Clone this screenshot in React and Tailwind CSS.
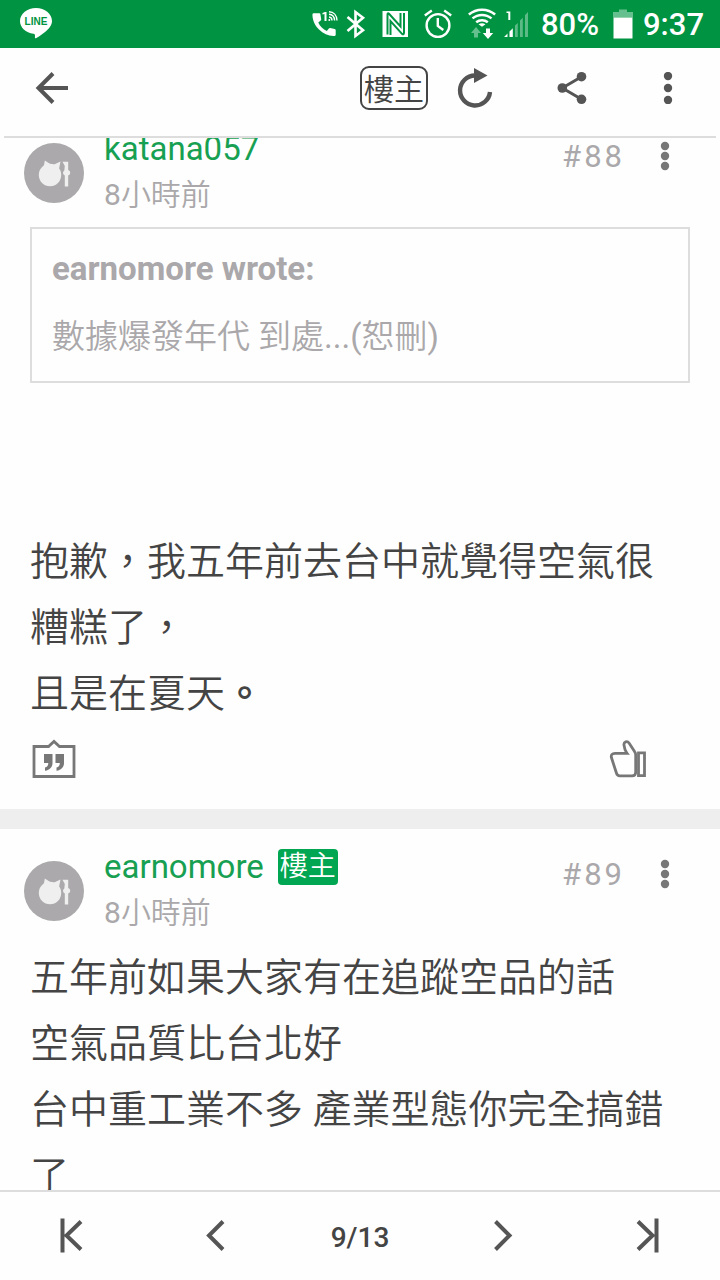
import React from "react";

function LineLogo() {
  return (
    <svg className="h-8 w-8" viewBox="20 9 32 32" role="img" aria-label="LINE">
      <path
        fill="#fff"
        d="M36 9c-8.800 0-16 5.800-16 13 0 6.500 5.800 11.900 13.500 12.800 1.300.3 1.600 1 1.500 2.300l-.1 1.500c-.1.700.4.900 1 .6C40.500 36.700 47.500 32 50.200 27.500 51.400 25.800 52 24 52 22c0-7.200-7.200-13-16-13z"
      />
      <text x="36" y="26" textAnchor="middle" fill="#009442" fontSize="10" className="font-['Liberation_Sans',sans-serif] font-bold">
        LINE
      </text>
    </svg>
  );
}

function CallIcon() {
  return (
    <svg className="h-8 w-[26px]" viewBox="311 8 26 32" fill="#fff" aria-hidden="true">
      <path d="M311.500 13.500c-.4 5.500 2 11.500 6.500 16 4.500 4.400 10 6.800 15.600 6.400.7 0 1.100-.5 1.100-1.200v-4.600c0-.6-.4-1.100-1-1.200l-4.500-.8c-.5-.1-1 .1-1.300.5l-2.100 2.500c-3.600-1.600-7-5-8.500-8.600l2.400-2c.4-.3.6-.8.5-1.300l-.8-5c-.1-.6-.6-1-1.200-1h-5.400c-.7 0-1.200.2-1.300 1z" />
      <path d="M321.500 14.500v-1.600l2.500-.9h1.500V21h-2v-7z" />
      <g fill="none" stroke="#fff" strokeWidth="1.400">
        <path d="M328 17a3.500 3.500 0 0 1 3 3.500M328 14.200c3.300.2 5.400 2.500 5.600 6.300M328 11.800c4.700.1 7.800 3.500 8 8.700" />
      </g>
      <circle cx="328.300" cy="20" r="1" />
    </svg>
  );
}

function BluetoothIcon() {
  return (
    <svg className="h-8 w-5" viewBox="345 8 20 32" fill="none" stroke="#fff" strokeWidth="2.600" aria-hidden="true">
      <path d="M346.500 17l15.500 13.300-7.500 5.700V12l7.500 5.700L346.500 31" />
    </svg>
  );
}

function NfcIcon() {
  return (
    <svg className="h-8 w-[26px]" viewBox="381 8 26 32" aria-hidden="true">
      <path fill="#fff" d="M381.500 11H407v26h-25.500z" />
      <path fill="none" stroke="#009442" strokeWidth="2" d="M386.500 34.500V14.800c0-1.500.6-1.900 1.500-1l11.500 12.700V13M389.500 35V21l11.500 12.800c1 1 2 .6 2-1V13" />
    </svg>
  );
}

function AlarmIcon() {
  return (
    <svg className="h-8 w-7" viewBox="424 8 28 32" fill="none" stroke="#fff" strokeWidth="2.400" aria-hidden="true">
      <circle cx="438" cy="25.500" r="11.400" />
      <path d="M437.800 18v8l5.500 4M424.800 15.500l7-5M451.200 15.500l-7-5" />
    </svg>
  );
}

function WifiIcon() {
  return (
    <svg className="h-8 w-7" viewBox="468 8 28 32" fill="none" aria-hidden="true">
      <g stroke="#fff" strokeWidth="2.500">
        <path d="M468.900 14.500c7.500-6.500 18.700-6.500 26.200 0M472.500 18.400c5.500-4.700 13.500-4.700 19 0M476.200 22.200c3.300-2.700 8.300-2.700 11.600 0" />
      </g>
      <path fill="#fff" d="M478.500 24.200c2-1.300 5-1.300 7 0l-3.500 2.600zM486 28.500h4V33h3.200l-5.200 6-5.200-6h3.200z" />
      <path fill="#66bf8e" d="M474 37.500h4V33h3l-5-6-5 6h3z" />
    </svg>
  );
}

function SignalIcon() {
  return (
    <svg className="h-8 w-[25px]" viewBox="504 8 25 32" aria-hidden="true">
      <path fill="#fff" d="M506.500 13v-1.500h3.800V20h-2v-7zM504 37l3.500-3.500V37zM509.500 31.500l3.300-3.300V37h-3.300z" />
      <path fill="#5cba87" d="M515 25.500l2.800-2.500v14H515zM520 20.500l2.800-2.800V37H520zM525 15l3-3v25h-3z" />
    </svg>
  );
}

function BatteryIcon() {
  return (
    <svg className="h-8 w-5" viewBox="612 8 20 32" aria-hidden="true">
      <path fill="#66bf8e" d="M618 9.500h8V12h6v5.500h-20V12h6z" />
      <path fill="#fff" d="M612.500 17.500h19v21h-19z" />
    </svg>
  );
}

function Dots({ color, gap }) {
  return (
    <svg className="h-8 w-8" viewBox="-16 -16 32 32" fill={color} aria-hidden="true">
      <circle cy={-gap} r="4.200" />
      <circle r="4.200" />
      <circle cy={gap} r="4.200" />
    </svg>
  );
}

function Stroke({ d }) {
  return (
    <svg className="h-10 w-10" viewBox="0 0 40 40" fill="none" stroke="#555" strokeWidth="4" aria-hidden="true">
      <path d={d} />
    </svg>
  );
}

function Avatar() {
  return (
    <svg className="mt-8 h-[60px] w-[60px] shrink-0" viewBox="0 0 60 60" aria-hidden="true">
      <circle cx="30" cy="30" r="30" fill="#aba9ab" />
      <g fill="#efefef">
        <circle cx="26" cy="32" r="11.200" />
        <path d="M20.800 17.500l6.200 4-7.500 3.500zM36.500 18.500l-1.800 9-5.700-5.500z" />
        <path d="M38.500 18.800h5.700v8.200a2.800 2.800 0 0 1 0 5.400v11.200h-3.400V32.400a2.800 2.800 0 0 1-.5-5l.5-4.400z" />
      </g>
    </svg>
  );
}

function PostHeader({ name, owner, number }) {
  return (
    <header className="flex pr-[39px] pl-6">
      <Avatar />
      <div className="ml-5 flex-1 pt-4">
        <div className="flex h-11 items-center gap-[14px]">
          <a href="#profile" className="text-[33px] leading-[46px] font-normal text-[#17a052]">{name}</a>
          {owner && (
            <span className="flex h-9 items-center rounded bg-[#00a651] px-[2px] text-[28px] leading-8 text-white">樓主</span>
          )}
        </div>
        <time className="block text-[30px] leading-[48px] text-[#aaa8aa]">
          <span className="font-normal">8</span>小時前
        </time>
      </div>
      <span className="pt-6 text-[31px] leading-[44px] font-normal tracking-[3px] text-[#aaa8aa]">{number}</span>
      <button type="button" aria-label="更多" className="mt-[29px] ml-6 flex h-8 w-8 justify-center">
        <Dots color="#777" gap={10} />
      </button>
    </header>
  );
}

const bodyText = "px-[30px] text-[39px] leading-[66px] text-[#444]";

export default function App() {
  return (
    <div lang="zh-TW" className="flex h-screen flex-col overflow-hidden bg-[#fefefe] font-['Roboto','Noto_Sans_CJK_TC',sans-serif] font-[350]">
      <div className="flex h-12 shrink-0 items-center bg-[#009442] pr-4 pl-5 font-medium text-white">
        <LineLogo />
        <div className="ml-auto flex items-center">
          <CallIcon />
          <span className="w-2" />
          <BluetoothIcon />
          <span className="w-4" />
          <NfcIcon />
          <span className="w-4" />
          <AlarmIcon />
          <span className="w-4" />
          <WifiIcon />
          <span className="w-2" />
          <SignalIcon />
          <span className="ml-3 pt-[2px] text-[31px] leading-[46px]">80%</span>
          <span className="w-[14px]" />
          <BatteryIcon />
          <span className="ml-[10px] pt-[2px] text-[31px] leading-[46px]">9:37</span>
        </div>
      </div>

      <nav className="mx-1 flex h-[90px] shrink-0 items-center border-b-2 border-[#ddd] pb-2">
        <button type="button" aria-label="返回" className="flex w-24 justify-center">
          <Stroke d="M36 20H6M21 5.500L6.500 20 21 34.500" />
        </button>
        <button type="button" className="ml-auto flex h-11 w-[68px] items-center justify-center rounded-[9px] border-2 border-[#444] pt-1 text-[30px] leading-9 text-[#444]">
          樓主
        </button>
        <button type="button" aria-label="重新整理" className="flex w-24 justify-center">
          <svg className="h-10 w-10" viewBox="456 68 40 40" aria-hidden="true">
            <path fill="none" stroke="#555" strokeWidth="4.400" d="M475 75.500a15 15 0 1 0 15 16.500" />
            <path fill="#555" d="M474 68l13.500 7.500L474 83z" />
          </svg>
        </button>
        <button type="button" aria-label="分享" className="flex w-24 justify-center">
          <svg className="h-10 w-10" viewBox="552 68 40 40" fill="#555" aria-hidden="true">
            <path fill="none" stroke="#555" strokeWidth="3" d="M581.500 76.700L562.300 88l19.200 11.300" />
            <circle cx="562.300" cy="88" r="4.800" />
            <circle cx="581.500" cy="76.700" r="4.800" />
            <circle cx="581.500" cy="99.300" r="4.800" />
          </svg>
        </button>
        <button type="button" aria-label="選單" className="flex w-24 justify-center">
          <Dots color="#555" gap={12} />
        </button>
      </nav>

      <main className="min-h-0 flex-1 overflow-hidden">
        <article className="-mt-[27px]">
          <PostHeader name="katana057" number="#88" />
          <blockquote className="mx-[30px] mt-2 border-2 border-[#ddd] px-5 py-4 text-[33px] text-[#aaa8aa]">
            <p className="leading-[48px] font-bold">earnomore wrote:</p>
            <p className="pt-4 leading-[56px]">
              數據爆發年代 到處<span className="font-normal">...(</span>恕刪<span className="font-normal">)</span>
            </p>
          </blockquote>
          <p className={`${bodyText} pt-[146px]`}>
            抱歉，我五年前去台中就覺得空氣很糟糕了，
            <br />
            且是在夏天<span className="font-bold">。</span>
          </p>
          <div className="flex h-[82px] items-start justify-between pt-3 pr-[73px] pl-8">
            <button type="button" aria-label="引言">
              <svg className="h-10 w-11" viewBox="32 738 44 40" aria-hidden="true">
                <path fill="none" stroke="#777" strokeWidth="2.800" d="M34 745.500h14.500l5.500-5 5.500 5H74v30H34z" />
                <path fill="#777" d="M44 753h8.500v9c0 4-2.500 7-7.500 7.800v-3.300c2.300-.6 3.300-2 3.300-4.500H44zM55.500 753H64v9c0 4-2.500 7-7.500 7.800v-3.300c2.300-.6 3.300-2 3.300-4.500h-4.300z" />
              </svg>
            </button>
            <button type="button" aria-label="讚">
              <svg className="h-10 w-[38px]" viewBox="609 738 38 40" fill="none" stroke="#777" strokeWidth="2.800" aria-hidden="true">
                <path d="M627 752.300h-12c-3 0-4.300 1.700-3.500 4.500l5 15.500c.5 1.600 1.500 2.500 3.200 2.500H632c2.500 0 3.700-1.200 3.700-3.600V754c0-1.300-.3-2.300-1-3.200l-5.500-8.600c-2-2.800-5.700-1.500-5.200 2 .3 3 1 5.600 3 8.100z" />
                <path d="M638.500 751.800h6v22.900h-6z" />
              </svg>
            </button>
          </div>
        </article>

        <div className="h-5 bg-[#eee]" />

        <article>
          <PostHeader name="earnomore" owner number="#89" />
          <p className={`${bodyText} pt-2`}>
            五年前如果大家有在追蹤空品的話
            <br />
            空氣品質比台北好
            <br />
            台中重工業不多 產業型態你完全搞錯了
          </p>
        </article>
      </main>

      <footer className="grid h-[90px] shrink-0 grid-cols-5 place-items-center border-t-2 border-[#ddd] bg-[#fefefe]">
        <button type="button" aria-label="第一頁">
          <Stroke d="M10.500 2.500v34M29 5.500L14.500 19.500 29 33.500" />
        </button>
        <button type="button" aria-label="上一頁">
          <Stroke d="M27 5.500L13 19.500l14 14" />
        </button>
        <span className="pt-1 text-[28px] font-medium text-[#444]">9/13</span>
        <button type="button" aria-label="下一頁">
          <Stroke d="M11.500 5.500l14 14-14 14" />
        </button>
        <button type="button" aria-label="最後一頁">
          <Stroke d="M28.500 2.500v34M10 5.500l14.500 14L10 33.500" />
        </button>
      </footer>
    </div>
  );
}
